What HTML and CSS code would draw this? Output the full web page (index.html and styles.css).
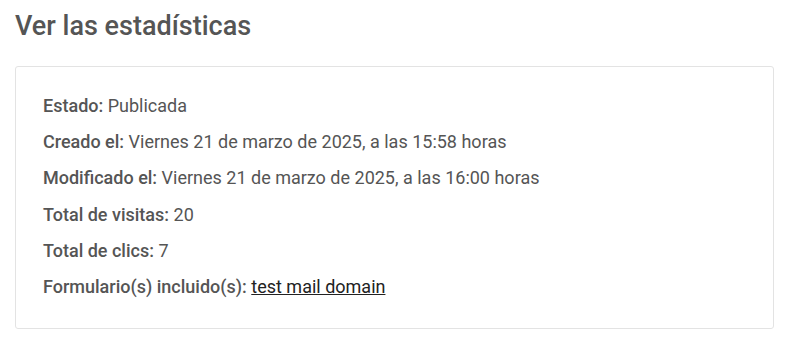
FILE: index.html
```html
<!DOCTYPE html>
<html lang="es">
<head>
<meta charset="utf-8">
<title>Ver las estadísticas</title>
<link rel="stylesheet" href="styles.css">
</head>
<body>
<div class="page">
  <h1 class="title">Ver las estadísticas</h1>
  <div class="card">
    <p class="row"><span class="label">Estado:</span> Publicada</p>
    <p class="row"><span class="label">Creado el:</span> Viernes 21 de marzo de 2025, a las 15:58 horas</p>
    <p class="row"><span class="label">Modificado el:</span> Viernes 21 de marzo de 2025, a las 16:00 horas</p>
    <p class="row"><span class="label">Total de visitas:</span> 20</p>
    <p class="row"><span class="label">Total de clics:</span> 7</p>
    <p class="row"><span class="label">Formulario(s) incluido(s):</span> <a class="link" href="#">test mail domain</a></p>
  </div>
</div>
</body>
</html>
```
FILE: styles.css
```css
html, body {
  margin: 0;
  padding: 0;
  background: #ffffff;
}
body {
  font-family: Roboto, "Liberation Sans", sans-serif;
  color: #555555;
}
.page {
  padding: 8px 12px 0 15px;
}
.title {
  margin: 0;
  font-size: 27px;
  font-weight: 500;
  line-height: 36px;
  color: #555555;
}
.card {
  margin-top: 22px;
  border: 1px solid #e3e3e3;
  border-radius: 3px;
  padding: 27px 27px 29px;
  display: flex;
  flex-direction: column;
  gap: 12px;
}
.row {
  margin: 0;
  font-size: 18px;
  line-height: 24.2px;
}
.label {
  font-weight: 500;
}
.link {
  color: #222222;
  text-decoration: underline;
}
```
